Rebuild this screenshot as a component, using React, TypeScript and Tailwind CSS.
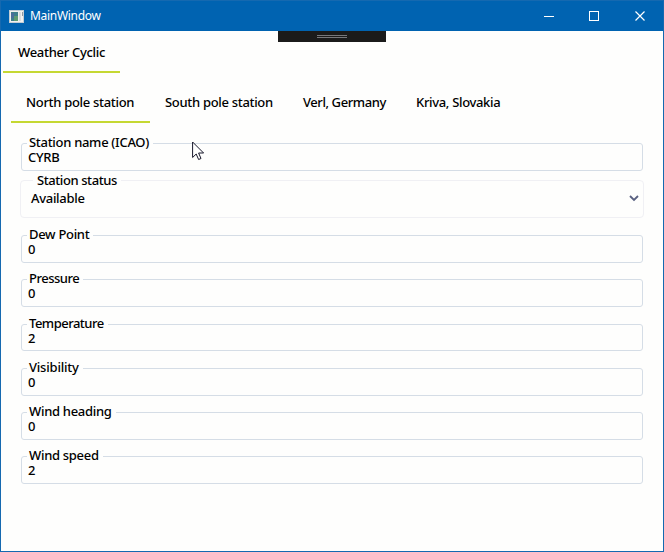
type FieldProps = {
  label: string;
  value: string;
  box: string;
  track?: string;
};

function Field({ label, value, box, track = "tracking-[-0.3px]" }: FieldProps) {
  return (
    <div className={`flex flex-col items-start rounded-[3px] border border-[#d5dde6] ${box}`}>
      <div className={`-mt-[9px] ml-[5px] h-[14px] bg-[#fefefd] pr-[4px] pl-[2px] leading-[14px] whitespace-nowrap ${track}`}>
        {label}
      </div>
      <div className="h-[16px] pl-[6px] leading-[16px]">{value}</div>
    </div>
  );
}

const tabs = [
  { name: "North pole station", style: "w-[139px] border-[#c5d832] tracking-[-0.31px]" },
  { name: "South pole station", style: "w-[138px] border-transparent tracking-[-0.31px]" },
  { name: "Verl, Germany", style: "w-[113px] border-transparent tracking-[-0.42px]" },
  { name: "Kriva, Slovakia", style: "w-[115px] border-transparent tracking-[-0.33px]" },
];

export default function App() {
  return (
    <div className="flex h-[552px] w-[664px] flex-col overflow-hidden border border-[#1569b0] bg-[#fefefd] font-['Noto_Sans','Open_Sans',sans-serif] text-[13px] font-medium tracking-[-0.3px] text-black">
      <header className="flex h-[30px] shrink-0 items-center bg-[#0063b1] pl-2 text-white">
        <svg width="15" height="13" viewBox="0 0 15 13" shapeRendering="crispEdges">
          <rect width="15" height="13" fill="#c3cdd4" />
          <rect x="1" y="1" width="13" height="11" fill="#f1f1ef" />
          <rect x="2" y="2" width="7" height="9" fill="#3f7f8b" />
          <rect x="2" y="3" width="3" height="5" fill="#4b6f9a" />
          <rect x="5" y="6" width="4" height="5" fill="#5f9b72" />
          <rect x="10" y="2" width="2" height="9" fill="#d9dcde" />
          <rect x="13" y="2" width="1" height="4" fill="#8f9aa2" />
        </svg>
        <span className="ml-[6px] text-[12px] font-normal tracking-[-0.3px]">MainWindow</span>
        <svg className="mr-[16px] ml-auto" width="103" height="11" viewBox="0 0 103 11" fill="none" stroke="white">
          <path d="M0 5.5H10M45.5.5h9v9h-9z" shapeRendering="crispEdges" />
          <path d="M91.5.5l9 9m0-9l-9 9" strokeWidth="1.2" />
        </svg>
      </header>
      <main className="relative flex min-h-0 flex-1 flex-col">
        <div className="absolute top-0 left-[277px] flex h-[11px] w-[108px] flex-col items-center justify-center gap-px bg-[#1b1b1b]">
          <div className="h-px w-[30px] bg-[#77777a]" />
          <div className="h-px w-[30px] bg-[#77777a]" />
        </div>
        <div className="ml-[2px] h-[42px] w-[117px] border-b-2 border-[#c5d832] pl-[15px] leading-[43px] whitespace-nowrap">Weather Cyclic</div>
        <nav className="mt-[8px] ml-[10px] flex h-[42px]">
          {tabs.map((t) => (
            <div key={t.name} className={`h-[42px] shrink-0 border-b-2 pl-[15px] leading-[43px] whitespace-nowrap ${t.style}`}>
              {t.name}
            </div>
          ))}
        </nav>
        <section className="mt-[20px] ml-5 flex w-[622px] flex-col">
          <Field label="Station name (ICAO)" value="CYRB" box="h-[28px]" />
          <div className="mt-[9px] -ml-px flex h-[38px] w-[624px] flex-col items-start rounded-[4px] border border-[#f0f0f4]">
            <div className="-mt-[8px] ml-[12px] h-[14px] bg-[#fefefd] px-[4px] leading-[14px] tracking-[-0.42px]">Station status</div>
            <div className="mt-[3px] flex h-[16px] w-full items-center pr-[4px] pl-[10px]">
              <span className="leading-[16px]">Available</span>
              <svg className="ml-auto" width="10" height="7" viewBox="0 0 10 7" fill="none" stroke="#596080" strokeWidth="1.8">
                <path d="M1 1l4 4 4-4" />
              </svg>
            </div>
          </div>
          <Field label="Dew Point" value="0" box="mt-[17px] h-[28px]" />
          <Field label="Pressure" value="0" box="mt-[16px] h-[28px]" track="tracking-[-0.5px]" />
          <Field label="Temperature" value="2" box="mt-[17px] h-[27px]" track="tracking-[-0.5px]" />
          <Field label="Visibility" value="0" box="mt-[17px] h-[28px]" track="tracking-[-0.2px]" />
          <Field label="Wind heading" value="0" box="mt-[16px] h-[28px]" />
          <Field label="Wind speed" value="2" box="mt-[16px] h-[28px]" />
        </section>
        <svg className="absolute top-[110px] left-[191px]" width="13" height="20" viewBox="0 0 13 20" fill="white" stroke="#17172a">
          <path d="M.6 1v15.5l3.6-3.5 2.4 5.5 2.4-1-2.4-5.5h5z" />
        </svg>
      </main>
    </div>
  );
}
